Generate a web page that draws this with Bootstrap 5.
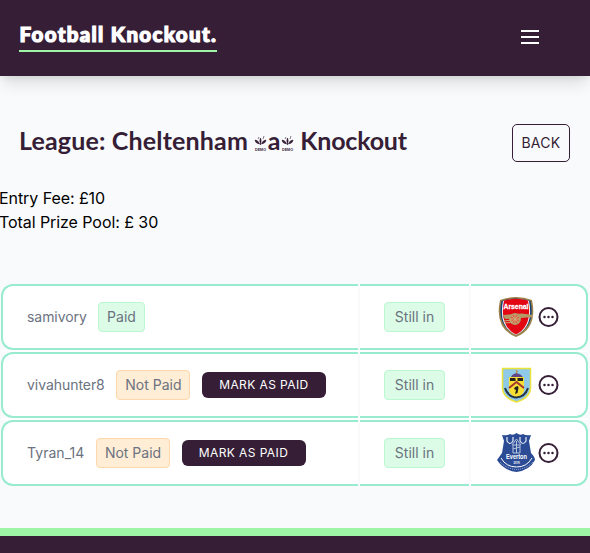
<!DOCTYPE html>
<html lang="en">
<head>
<meta charset="utf-8">
<meta name="viewport" content="width=device-width, initial-scale=1">
<title>Football Knockout</title>
<link href="https://cdn.jsdelivr.net/npm/bootstrap@5.3.0/dist/css/bootstrap.min.css" rel="stylesheet">
<style>
:root{--plum:#351e36;--mint:#98ebcf;--lime:#9ff5a6}
body{background:#f9fafc;font-family:Inter,"Liberation Sans",sans-serif;color:#000;height:553px;overflow:hidden}
.topbar{height:76px;background:var(--plum);padding:0 48px 0 19px;box-shadow:0 10px 15px -3px rgba(0,0,0,.12),0 4px 6px -2px rgba(0,0,0,.06)}
.topbar svg{margin-top:-2px}
.logo{width:198px;height:28px;margin-top:-1px;border-bottom:2px solid var(--lime);color:#fff;font:900 20.5px/20px Lato,sans-serif;letter-spacing:1.33px;-webkit-text-stroke:1.2px #fff;white-space:nowrap;padding-left:.5px}
.titlebar{height:38px;margin-top:48px;padding:0 20px 0 19px}
.title{font:700 25px/32px Lato,sans-serif;color:var(--plum);white-space:nowrap;letter-spacing:.16px;margin:0}
.title svg{overflow:visible;letter-spacing:0}
.title .tail{letter-spacing:-.2px}
.back{width:58px;height:38px;border:1px solid var(--plum);border-radius:5px;padding:0 0 1px;font-size:14px;color:var(--plum);letter-spacing:.3px}
.fees{margin-top:24px;line-height:24px;font-size:16px;letter-spacing:-.07px;text-indent:-1px}
.entries{margin-top:50px;padding-left:1px;display:grid;row-gap:2px;background:linear-gradient(#fff,#fff) 1px 0/587px 100% no-repeat}
.entry{display:grid;grid-template-columns:357px 109px 117px;column-gap:2px;height:66px;width:587px;background:#f9fafb}
.entry>div{background:#fff;border:solid var(--mint);border-width:2px 0;font-size:14px;color:#6b7280}
.entry>.who{border-left-width:2px;border-radius:12px 0 0 12px;padding-left:24px}
.entry>.team{border-right-width:2px;border-radius:0 12px 12px 0;padding-left:24px}
.tag{height:30px;border:1px solid #bbf7d0;background:#dcfce7;border-radius:4px;line-height:28px;text-align:center;white-space:nowrap;margin-left:12px}
.tag.due{background:#ffedd5;border-color:#fed7aa;width:74px}
.tag.ok{width:47px}.tag.alive{width:61px;margin:0}
.pay{width:124px;height:26px;border-radius:6px;background:var(--plum);color:#fff;font-size:12px;padding:0 1px 0 0;letter-spacing:.4px;margin-left:12px;line-height:26px;border:0}
.player{letter-spacing:-.05px;padding-bottom:2px;white-space:nowrap}
.name1{width:59px}.name2{width:77.4px}.name3{width:57px;letter-spacing:.05px}
.foot{margin-top:42px;border-top:8px solid var(--lime);background:var(--plum);height:30px}
</style>
<script src="https://cdn.jsdelivr.net/npm/bootstrap@5.3.0/dist/js/bootstrap.bundle.min.js"></script>
</head>
<body>
<header class="topbar d-flex align-items-center justify-content-between">
 <div class="logo">Football Knockout.</div>
 <svg width="22" height="16" viewBox="0 0 22 16"><path d="M1 2H19M1 8H19M1 14H19" stroke="#fff" stroke-width="2"/></svg>
</header>
<main>
 <div class="titlebar d-flex justify-content-between">
  <h1 class="title">League: Cheltenham <svg width="13.500" height="18" viewBox="0 0 13.500 18"><path d="M6.500 10Q5.200 5 6.500 3Q7.800 5 6.500 10M5.500 9Q1 8 1 5Q4 5 5.500 9M7.500 9Q12 8 12 5Q9 5 7.500 9M4 4L5 2M9 4L10 1" fill="#351e36" stroke="#351e36" stroke-width=".6"/><text x="1" y="15.500" font-family="Liberation Sans" font-weight="700" font-size="4.400" textLength="11" lengthAdjust="spacingAndGlyphs" fill="#351e36">DEMO</text></svg>a<svg width="13.500" height="18" viewBox="0 0 13.500 18"><path d="M6.500 10Q5.200 5 6.500 3Q7.800 5 6.500 10M5.500 9Q1 8 1 5Q4 5 5.500 9M7.500 9Q12 8 12 5Q9 5 7.500 9M4 4L5 2M9 4L10 1" fill="#351e36" stroke="#351e36" stroke-width=".6"/><text x="1" y="15.500" font-family="Liberation Sans" font-weight="700" font-size="4.400" textLength="11" lengthAdjust="spacingAndGlyphs" fill="#351e36">DEMO</text></svg> <span class="tail">Knockout</span></h1>
  <button class="btn back">BACK</button>
 </div>
 <div class="fees"><div>Entry Fee: £10</div><div>Total Prize Pool: £ 30</div></div>
 <section class="entries">
  <div class="entry">
   <div class="who d-flex align-items-center"><span class="player name1">samivory</span><span class="tag ok">Paid</span></div>
   <div class="d-flex align-items-center justify-content-center"><span class="tag alive">Still in</span></div>
   <div class="team d-flex align-items-center">
    <svg width="42" height="44" viewBox="0 0 42 44"><path d="M5 5Q21-1 37 5Q43 33 21 42Q-1 33 5 5Z" fill="#9c824a"/><path d="M6.500 6Q21 1 35.500 6Q41 31 21 40Q1 31 6.500 6Z" fill="#174277"/><path d="M8 6Q21 2 34 6Q39 32 21 40Q3 32 8 6Z" fill="#fff"/><path d="M9 5.500Q21 2 33 5.500Q38 31 21 39.500Q4 31 9 5.500Z" fill="#e30613"/><text x="8.500" y="14" font-family="Liberation Sans" font-weight="700" font-size="7.800" textLength="25" lengthAdjust="spacingAndGlyphs" fill="#fff" stroke="#fff" stroke-width=".3">Arsenal</text><path d="M8 20L27 18.500 38 20V22L26 23 10 24Z" fill="#b49a66"/><circle cx="20" cy="24" r="5" fill="#e35a45" stroke="#b49a66" stroke-width="2"/><path d="M15 24H25M20 19V29M16.500 20.500L23.500 27.500M23.500 20.500L16.500 27.500M9 26L17 25M10 28L18 27" stroke="#c6ae79"/></svg>
    <svg width="22" height="22" viewBox="0 0 22 22"><circle cx="11.500" cy="11" r="9" fill="none" stroke="#351e36" stroke-width="2"/><g fill="#351e36"><circle cx="7.500" cy="11" r="1.250"/><circle cx="11.500" cy="11" r="1.250"/><circle cx="15.500" cy="11" r="1.250"/></g></svg></div>
  </div>
  <div class="entry">
   <div class="who d-flex align-items-center"><span class="player name2">vivahunter8</span><span class="tag due">Not Paid</span><button class="btn pay">MARK AS PAID</button></div>
   <div class="d-flex align-items-center justify-content-center"><span class="tag alive">Still in</span></div>
   <div class="team d-flex align-items-center">
    <svg width="42" height="44" viewBox="0 0 42 44"><path d="M7.500 5.500H35.500V25Q35 35 21.500 39Q8 35 7.500 25Z" fill="#8ec9e8" stroke="#ece33a" stroke-width="1.500"/><path d="M14 14H29V28Q27 33 21.500 35Q16 33 14 28Z" fill="#f6df32"/><path d="M16 14Q17 11 21.500 10Q26 11 28 14Z" fill="#62468a"/><path d="M21.500 11L20.500 7 23 8Z" fill="#b98c43"/><path d="M15 15H20.500V18H15M22.500 15H28V18H22.500" fill="#25201b"/><path d="M14 25L21.500 19 29 25" fill="none" stroke="#a43831" stroke-width="2"/><path d="M20 24L23 23 23.500 25 22.500 30 20 31 21 27 19 26Z" fill="#222"/><path d="M10 25Q13 34 21.500 34.500Q30 34 33 25" fill="none" stroke="#263445" stroke-width="2"/></svg>
    <svg width="22" height="22" viewBox="0 0 22 22"><circle cx="11.500" cy="11" r="9" fill="none" stroke="#351e36" stroke-width="2"/><g fill="#351e36"><circle cx="7.500" cy="11" r="1.250"/><circle cx="11.500" cy="11" r="1.250"/><circle cx="15.500" cy="11" r="1.250"/></g></svg></div>
  </div>
  <div class="entry">
   <div class="who d-flex align-items-center"><span class="player name3">Tyran_14</span><span class="tag due">Not Paid</span><button class="btn pay">MARK AS PAID</button></div>
   <div class="d-flex align-items-center justify-content-center"><span class="tag alive">Still in</span></div>
   <div class="team d-flex align-items-center">
    <svg width="42" height="44" viewBox="0 0 42 44"><path d="M7 4Q12 5 15 3Q18 5 21.500 2Q25 5 28 3Q31 5 36 4L34 10 36 22Q40 26 40 29Q35 39 21.500 41Q8 39 2 29L7 22 9 10Z" fill="#2b4b95"/><path d="M12 6V10Q15 15 18 10V6M25 6V10Q28 15 31 10V6" fill="none" stroke="#e7edf8" stroke-width="1.200"/><path d="M17 14L21.500 8 26 14M18 14H25V22H18ZM21.500 10V22M18 18L25 16" fill="none" stroke="#b8c6e2"/><text x="11" y="28" font-family="Liberation Sans" font-weight="700" font-size="6.500" textLength="21" lengthAdjust="spacingAndGlyphs" fill="#fff">Everton</text><text x="18" y="33" font-family="Liberation Sans" font-size="4" textLength="7" fill="#fff">1878</text><path d="M6 27Q11 36 21.500 36Q32 36 37 27" fill="none" stroke="#fff"/><path d="M5 31Q12 38 21.500 38.500Q31 38 38 31" fill="none" stroke="#a8b8da" stroke-dasharray="1 1"/></svg>
    <svg width="22" height="22" viewBox="0 0 22 22"><circle cx="11.500" cy="11" r="9" fill="none" stroke="#351e36" stroke-width="2"/><g fill="#351e36"><circle cx="7.500" cy="11" r="1.250"/><circle cx="11.500" cy="11" r="1.250"/><circle cx="15.500" cy="11" r="1.250"/></g></svg></div>
  </div>
 </section>
</main>
<footer class="foot"></footer>
</body>
</html>
